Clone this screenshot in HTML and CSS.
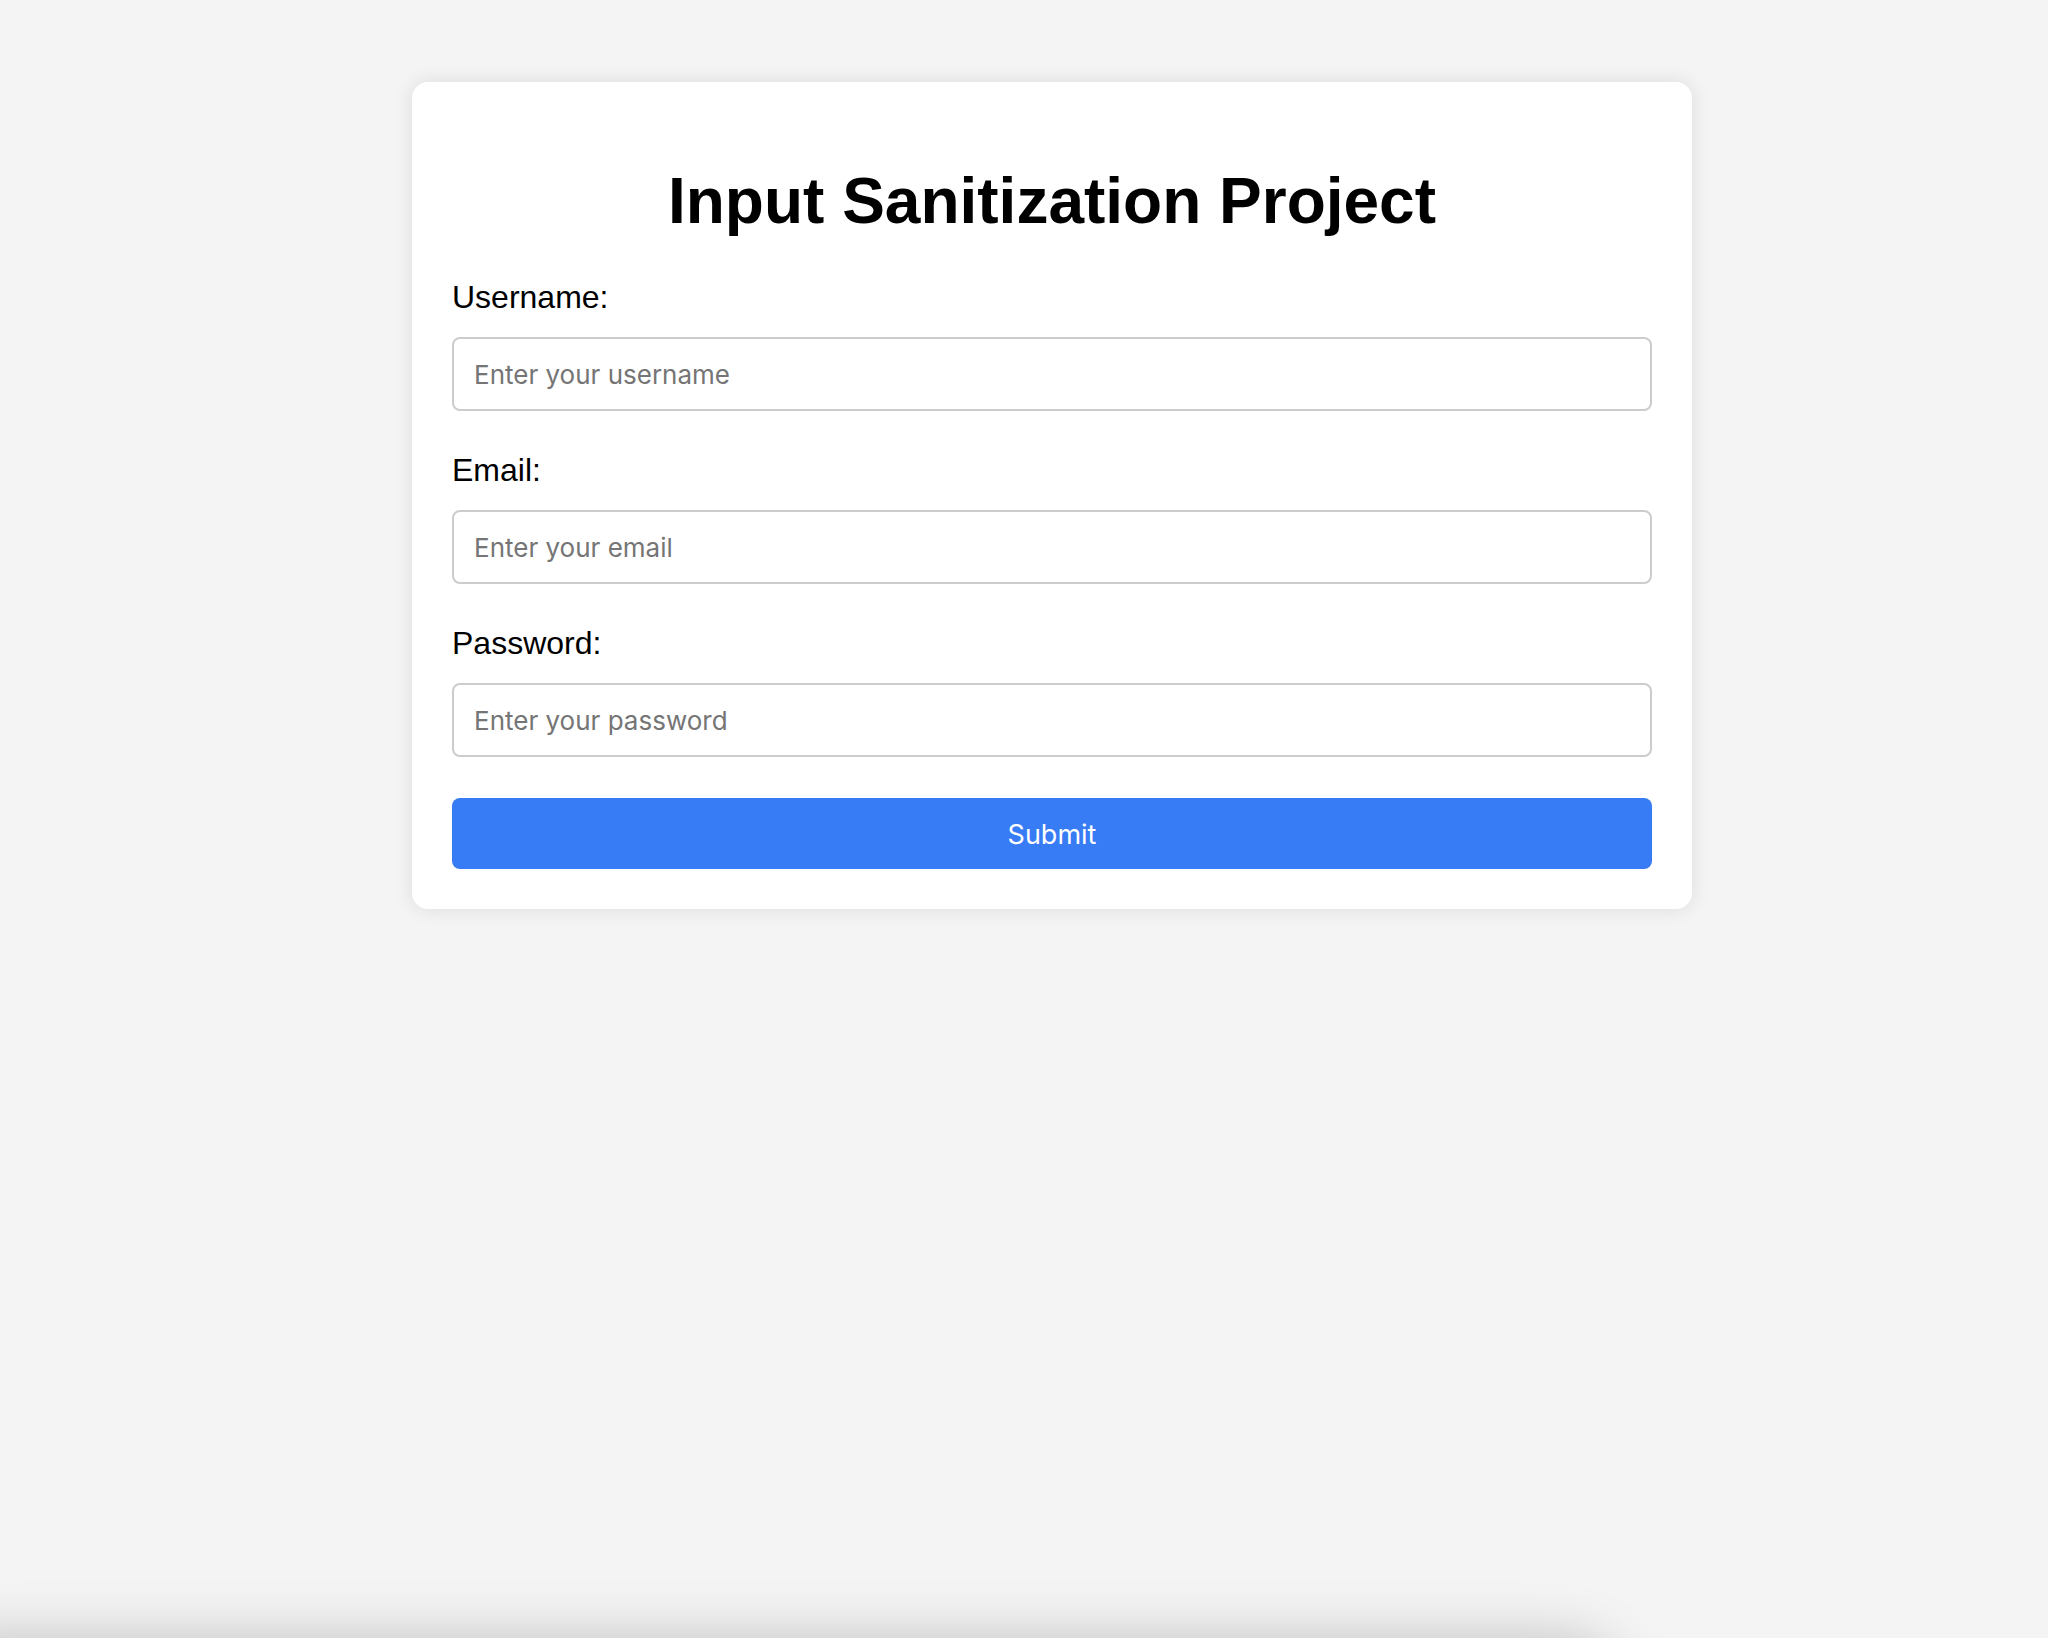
FILE: index.html
```html
<!DOCTYPE html>
<html lang="en">
<head>
<meta charset="utf-8">
<title>Input Sanitization Project</title>
<link rel="stylesheet" href="styles.css">
</head>
<body>
<main class="card">
  <h1 class="title">Input Sanitization Project</h1>
  <form class="form">
    <label class="label" for="username">Username:</label>
    <input class="field" type="text" id="username" placeholder="Enter your username">
    <label class="label" for="email">Email:</label>
    <input class="field" type="email" id="email" placeholder="Enter your email">
    <label class="label" for="password">Password:</label>
    <input class="field" type="password" id="password" placeholder="Enter your password">
    <button class="submit" type="button">Submit</button>
  </form>
</main>
<div class="below-fold"></div>
</body>
</html>
```
FILE: styles.css
```css
html, body {
  margin: 0;
  padding: 0;
  overflow: hidden;
}
body {
  background: #f4f4f4;
  font-family: "Liberation Sans", Arial, Helvetica, sans-serif;
  color: #000;
}
.card {
  box-sizing: border-box;
  width: 1280px;
  margin: 82px 0 0 412px;
  padding: 40px;
  background: #fff;
  border-radius: 16px;
  box-shadow: 0 0 20px rgba(0, 0, 0, 0.1);
}
.title {
  margin: 43px 0 40px;
  font-size: 64px;
  font-weight: bold;
  text-align: center;
  line-height: 1.149;
}
.form {
  display: flex;
  flex-direction: column;
}
.label {
  display: block;
  font-size: 32px;
  line-height: 37px;
  margin-bottom: 21px;
}
.field {
  box-sizing: border-box;
  width: 100%;
  height: 74px;
  margin: 0 0 41px 0;
  padding: 2px 20px 0;
  border: 2px solid #cccccc;
  border-radius: 8px;
  font-family: Inter, "Noto Sans", sans-serif;
  font-size: 26px;
  color: #000;
  background: #fff;
  outline: none;
}
.field::placeholder {
  color: #757575;
}
.submit {
  box-sizing: border-box;
  width: 100%;
  height: 71px;
  padding: 2px 0 0;
  border: none;
  border-radius: 8px;
  background: #377bf5;
  color: #fff;
  font-family: Inter, "Noto Sans", sans-serif;
  font-size: 27px;
  cursor: pointer;
}
.below-fold {
  width: 1700px;
  height: 200px;
  margin: 735px 0 0 -80px;
  border-radius: 60px;
  background: #f4f4f4;
  box-shadow: 0 0 60px rgba(0, 0, 0, 0.25);
}
```
